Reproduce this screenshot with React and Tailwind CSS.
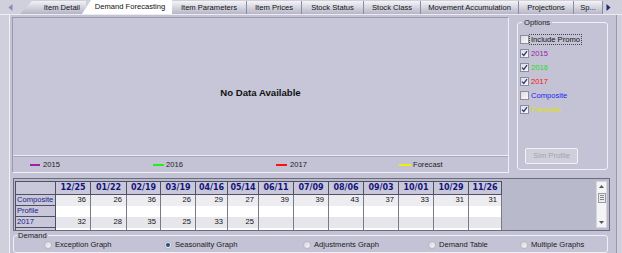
import React from "react";

const tabs = [
  { label: "Item Detail", w: 66, kind: "first" },
  { label: "Demand Forecasting", w: 90, kind: "active" },
  { label: "Item Parameters", w: 75 },
  { label: "Item Prices", w: 55 },
  { label: "Stock Status", w: 62 },
  { label: "Stock Class", w: 57 },
  { label: "Movement Accumulation", w: 98 },
  { label: "Projections", w: 55 },
  { label: "Sp...", w: 29 },
];

const cols = [
  ["12/25", 35],
  ["01/22", 36],
  ["02/19", 34],
  ["03/19", 35],
  ["04/16", 32],
  ["05/14", 31],
  ["06/11", 35],
  ["07/09", 35],
  ["08/06", 35],
  ["09/03", 35],
  ["10/01", 35],
  ["10/29", 35],
  ["11/26", 33],
];

const rows = [
  { label: "Composite", bg: "bg-[#ececf1]", vals: [36, 26, 36, 26, 29, 27, 39, 39, 43, 37, 33, 31, 31] },
  { label: "Profile", bg: "bg-white", vals: [] },
  { label: "2017", bg: "bg-[#e6e6ec]", vals: [32, 28, 35, 25, 33, 25] },
];

function Tab({ t }) {
  if (t.kind === "first") {
    return (
      <div
        className="h-[13px] flex items-center justify-end pr-[6px] bg-gradient-to-b from-[#f2f2f6] to-[#b4b4c6] [clip-path:polygon(12px_0,100%_0,100%_100%,0_100%)] text-[#111]"
        style={{ width: t.w }}
      >
        {t.label}
      </div>
    );
  }
  if (t.kind === "active") {
    return (
      <div
        className="h-[14px] -ml-[4px] flex items-center justify-center pl-[6px] bg-white [clip-path:polygon(9px_0,100%_0,100%_100%,0_100%)] text-[#111] relative"
        style={{ width: t.w }}
      >
        {t.label}
      </div>
    );
  }
  return (
    <div
      className="h-[13px] flex items-center justify-center border-r border-[#8c8ca0] bg-gradient-to-b from-[#f4f4f7] to-[#b6b6c8] text-[#111]"
      style={{ width: t.w }}
    >
      {t.label}
    </div>
  );
}

function Check({ checked }) {
  return (
    <span className="w-[9px] h-[9px] border border-[#8b8b99] bg-gradient-to-br from-[#dcdce2] to-[#fafafa] flex items-center justify-center shrink-0">
      {checked && (
        <svg width="7" height="7" viewBox="0 0 7 7">
          <path d="M1 3.6 L2.8 5.5 L6 1.2" fill="none" stroke="#2a3585" strokeWidth="1.3" />
        </svg>
      )}
    </span>
  );
}

function Radio({ checked, label }) {
  return (
    <div className="flex items-center gap-[3px]">
      <span className="w-[8px] h-[8px] rounded-full border border-[#b8b8c4] bg-gradient-to-br from-[#d6d6de] to-[#f6f6f8] flex items-center justify-center">
        {checked && <span className="w-[4px] h-[4px] rounded-full bg-[#1f4f8f]" />}
      </span>
      <span className="text-[#1a1a1a]">{label}</span>
    </div>
  );
}

export default function App() {
  return (
    <div
      className="w-[622px] h-[253px] overflow-hidden flex flex-col bg-[#c3c3d5] text-[7.6px] leading-none"
      style={{ fontFamily: "'Liberation Sans', Arial, sans-serif" }}
    >
      {/* tab strip */}
      <div className="h-[15px] flex items-end bg-[#d0d0dc] border-b border-[#ececf2]">
        <div className="w-[20px] h-[13px] flex items-center justify-center">
          <svg width="5" height="7" viewBox="0 0 5 7">
            <path d="M4.5 0 L0.5 3.5 L4.5 7 Z" fill="#8a8ab8" />
          </svg>
        </div>
        {tabs.map((t) => (
          <Tab key={t.label} t={t} />
        ))}
        <div className="w-[10px] h-[13px] flex items-center justify-center">
          <svg width="5" height="7" viewBox="0 0 5 7">
            <path d="M0.5 0 L4.5 3.5 L0.5 7 Z" fill="#1a2a78" />
          </svg>
        </div>
      </div>

      <div className="flex flex-1 min-h-0">
        <div className="w-[10px] bg-[#d0d0dc] border-r border-[#f2f2f6]" />
        <div className="w-[606px] flex flex-col pl-[2px] pt-[2px] bg-[#c3c3d5]">
          {/* row 1 */}
          <div className="flex h-[158px]">
            <div className="w-[497px] h-[156px] flex flex-col border border-[#9a9aae] border-b-[#f0f0f6] border-r-[#f0f0f6]">
              <div className="h-[138px] flex items-center justify-center pt-[12px] border-b border-[#ececf2] bg-[#c6c6d8]">
                <span className="font-bold text-[9.6px] text-[#111]">No Data Available</span>
              </div>
              <div className="flex-1 relative flex items-center border-t border-[#a8a8bc] text-[#222]">
                <div className="w-[17px]" />
                <div className="w-[10px] h-[2px] bg-[#a020a8]" />
                <span className="ml-[3px] w-[110px]">2015</span>
                <div className="w-[11px] h-[2px] bg-[#22ee22]" />
                <span className="ml-[2px] w-[110px]">2016</span>
                <div className="w-[11px] h-[2px] bg-[#ff1010]" />
                <span className="ml-[3px] w-[109px]">2017</span>
                <div className="w-[12px] h-[2px] bg-[#f0f000]" />
                <span className="ml-[2px]">Forecast</span>
              </div>
            </div>

            <fieldset className="ml-[8px] w-[91px] h-[151px] mt-[2px] border border-[#f0f0f6] rounded-[3px] px-[2px] flex flex-col">
              <legend className="px-[2px] ml-[2px] text-[#222]">Options</legend>
              <div className="flex flex-col gap-[5px] mt-[8px] pl-[0px]">
                <div className="flex items-center gap-[1px]">
                  <Check />
                  <span className="outline outline-1 outline-dotted outline-[#444] px-[1px] py-[1px] text-[#111]">Include Promo</span>
                </div>
                <div className="flex items-center gap-[2px]"><Check checked /><span className="text-[#a020a8]">2015</span></div>
                <div className="flex items-center gap-[2px]"><Check checked /><span className="text-[#22dd22]">2016</span></div>
                <div className="flex items-center gap-[2px]"><Check checked /><span className="text-[#ff1010]">2017</span></div>
                <div className="flex items-center gap-[2px]"><Check /><span className="text-[#2424f0]">Composite</span></div>
                <div className="flex items-center gap-[2px]"><Check checked /><span className="text-[#e0e000]">Forecast</span></div>
              </div>
              <div className="mt-[34px] ml-[5px] w-[53px] h-[16px] border border-[#f2f2f6] bg-[#cfcfdb] rounded-[2px] flex items-center justify-center text-[#a2a2ae]">
                Sim Profile
              </div>
            </fieldset>
          </div>

          {/* table */}
          <div className="mt-[3px] ml-[1px] w-[597px] h-[53px] flex border border-[#6c6c80] bg-[#b9b9cc] overflow-hidden">
            <div className="flex-1 pt-[2px] pl-[1px] overflow-hidden">
              <table className="border-collapse table-fixed">
                <thead>
                  <tr className="h-[13px]">
                    <th className="w-[40px] border border-[#505064] bg-[#c8c8da]" />
                    {cols.map(([c, w]) => (
                      <th
                        key={c}
                        className="border border-[#505064] bg-[#c8c8da] text-[#14147a] font-bold text-[8px] text-center p-0"
                        style={{ width: w, fontFamily: "'DejaVu Sans', Verdana, sans-serif" }}
                      >
                        {c}
                      </th>
                    ))}
                  </tr>
                </thead>
                <tbody>
                  {rows.map((r) => (
                    <tr key={r.label} className="h-[11px]">
                      <td className="border border-[#505064] bg-[#c8c8da] text-[#1c1c88] px-[1px] p-0">{r.label}</td>
                      {cols.map(([c], i) => (
                        <td key={c} className={`border-r border-[#7a7a86] ${r.bg} text-right pr-[4px] text-[#111] p-0`}>
                          {r.vals[i] ?? ""}
                        </td>
                      ))}
                    </tr>
                  ))}
                  <tr className="h-[11px]">
                    <td className="border border-[#505064] bg-[#c8c8da]" />
                    {cols.map(([c]) => (
                      <td key={c} className="border-r border-[#7a7a86] bg-white" />
                    ))}
                  </tr>
                </tbody>
              </table>
            </div>
            <div className="w-[11px] mr-[2px] my-[2px] bg-[#f4f4f6] border border-[#d6d6de] flex flex-col items-center justify-between py-[3px]">
              <svg width="5" height="3" viewBox="0 0 5 3"><path d="M0 3 L2.5 0 L5 3 Z" fill="#555" /></svg>
              <div className="w-[8px] h-[10px] border border-[#9a9aa6] bg-[#ececf0] flex flex-col items-center justify-center gap-[1px] -mt-[14px]">
                <span className="w-[4px] h-px bg-[#888]" />
                <span className="w-[4px] h-px bg-[#888]" />
                <span className="w-[4px] h-px bg-[#888]" />
              </div>
              <svg width="5" height="3" viewBox="0 0 5 3"><path d="M0 0 L2.5 3 L5 0 Z" fill="#555" /></svg>
            </div>
          </div>

          {/* demand */}
          <fieldset className="ml-[1px] w-[595px] h-[21px] mt-[1px] border border-[#f0f0f6] rounded-[3px] flex items-center">
            <legend className="ml-[3px] px-[1px] text-[#222]">Demand</legend>
            <div className="flex items-center mt-[1px] w-full">
              <div className="w-[30px]" />
              <div className="w-[120px]"><Radio label="Exception Graph" /></div>
              <div className="w-[139px]"><Radio checked label="Seasonality Graph" /></div>
              <div className="w-[125px]"><Radio label="Adjustments Graph" /></div>
              <div className="w-[92px]"><Radio label="Demand Table" /></div>
              <div><Radio label="Multiple Graphs" /></div>
            </div>
          </fieldset>
        </div>
        <div className="flex-1 bg-[#d0d0dc] border-l border-[#9898ac]" />
      </div>
    </div>
  );
}
